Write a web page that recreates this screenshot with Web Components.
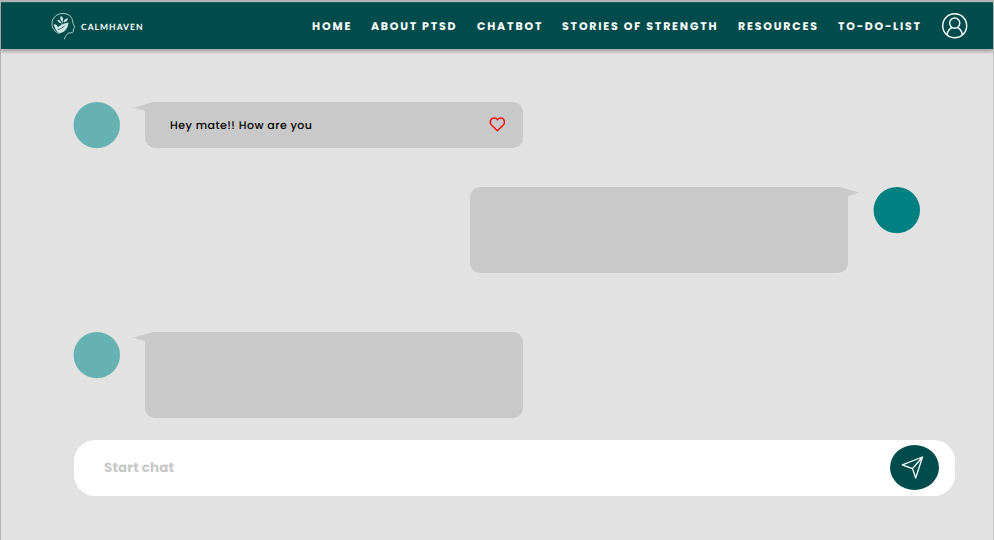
<!DOCTYPE html>
<html lang="en">
<head>
<meta charset="utf-8">
<title>CalmHaven Chatbot</title>
<style>
  html, body { margin: 0; height: 100%; overflow: hidden; }
  body { font-family: Poppins, Inter, sans-serif; background: #e2e2e2; }
</style>
</head>
<body>
<chat-page></chat-page>
<script>
const define = (name, html, setup) => {
  const t = document.createElement('template');
  t.innerHTML = html;
  customElements.define(name, class extends HTMLElement {
    connectedCallback() {
      if (this.shadowRoot) return;
      this.attachShadow({ mode: 'open' }).append(t.content.cloneNode(true));
      if (setup) setup(this);
    }
  });
};

/* A line of text tracked so that its letters fill the width attribute.
   The tiny rotation switches off vertical glyph snapping. */
define('tracked-text', `
  <style>:host{display:block;white-space:nowrap;line-height:1} span{display:inline-block;text-rendering:geometricPrecision;transform:rotate(.02deg)}</style>
  <span><slot></slot></span>`, host => {
  const w = parseFloat(host.getAttribute('width'));
  host.style.width = w + 'px';
  const span = host.shadowRoot.querySelector('span');
  const n = host.textContent.length;
  span.style.letterSpacing = (w - span.getBoundingClientRect().width) / (n - 1) + 'px';
});

define('brand-logo', `
  <style>
    :host{display:flex;align-items:center;color:#fff}
    svg{display:block;width:26px;height:30px}
    tracked-text{font:700 8.5px Lato,sans-serif;line-height:1;margin:4px 0 0 5px}
  </style>
  <svg viewBox="0 0 26 30" fill="none" stroke="#d9eceb" stroke-width=".8" stroke-linecap="round" stroke-linejoin="round">
    <path d="M9 22.5C4.5 20.8 2 17 2 12.8C2 6.5 7 2.5 13 2.5C19 2.5 22.6 6.4 22.8 11.2C22.8 13 24.6 14.8 24.8 16.3C24.8 17 23.5 17.1 23.5 17.7L23.3 20.7C22.8 22.3 18 21.3 17 23.2C15.8 24.6 15 26 14.5 28"/>
    <path d="M3.8 13.4C6 12.4 6.6 14.6 8.4 16C11.4 13.8 13.5 12.6 18.6 11.6C18 16.4 15.8 21.2 10 22.2C6.5 21 4.8 17.6 3.8 13.4Z" fill="#cfe6e4" stroke="none"/>
    <path d="M10.8 5C13.5 6.2 13.6 8.8 12.2 10.8C10.2 9.1 9.7 7.2 10.8 5ZM18 7.2C17.8 9.9 16 11.2 13.4 11.2C13.6 8.9 15.4 7.4 18 7.2ZM7.4 8.8C9.4 8.8 10.8 9.9 11.2 12C9 12.1 7.4 10.9 7.4 8.8Z" fill="#cfe6e4" stroke="none"/>
    <path d="M12.4 10.5L11.8 14" stroke-width=".7"/>
    <path d="M8 18.6C10.8 18.2 12.6 16.6 14.4 14.8" stroke="#004c4c" stroke-width=".7"/>
  </svg>
  <tracked-text width="61.5">CALMHAVEN</tracked-text>`);

define('nav-link', `
  <style>:host{display:block;color:#fff;font-size:11px;font-weight:700;line-height:1}</style>
  <tracked-text></tracked-text>`, host => {
  const old = host.shadowRoot.querySelector('tracked-text');
  const text = document.createElement('tracked-text');
  text.setAttribute('width', host.getAttribute('width'));
  text.textContent = host.getAttribute('label');
  old.replaceWith(text);
});

define('user-icon', `
  <style>:host{display:block} svg{display:block}</style>
  <svg width="26" height="26" viewBox="0 0 26 26" fill="none" stroke="#fff" stroke-width="1.4">
    <g transform="translate(-.3 -.3)"><circle cx="13" cy="13" r="12"/><circle cx="13" cy="10.4" r="5.1"/>
    <path d="M5.3 22.2C6 18 8.6 15.5 10.3 14.8M15.7 14.8C17.4 15.5 20 18 20.7 22.2"/></g>
  </svg>`);

define('site-header', `
  <style>
    :host{display:flex;align-items:center;box-sizing:border-box;height:47px;padding:0 25.5px 1px 49px;
      background:#004c4c;border-top:1px solid #256363;box-shadow:0 3px 3px rgba(0,0,0,.25);position:relative}
    nav{display:flex;gap:21px;margin:2px 22px 0 auto}
  </style>
  <brand-logo></brand-logo>
  <nav>
    <nav-link label="HOME" width="38.5"></nav-link>
    <nav-link label="ABOUT PTSD" width="84.5"></nav-link>
    <nav-link label="CHATBOT" width="64.5"></nav-link>
    <nav-link label="STORIES OF STRENGTH" width="154.5"></nav-link>
    <nav-link label="RESOURCES" width="79"></nav-link>
    <nav-link label="TO-DO-LIST" width="82"></nav-link>
  </nav>
  <user-icon></user-icon>`);

define('heart-icon', `
  <style>:host{display:block;margin-bottom:1px} svg{display:block}</style>
  <svg width="16" height="15" viewBox="0 0 16 15" fill="none" stroke="#f50d0d" stroke-width="1.5" stroke-linejoin="round">
    <path d="M8.4 13.7L2.3 7.8C.3 5.6 1.3 1.2 5 1.1C6.7 1 7.7 1.7 8.4 2.8C9.1 1.7 10.1 1 11.8 1.1C15.5 1.2 16.3 5.6 14.5 7.8Z"/>
  </svg>`);

define('chat-message', `
  <style>
    :host{display:flex;gap:14px;align-items:flex-start}
    :host([own]){flex-direction:row-reverse;gap:15px}
    .avatar{width:46.5px;height:46.5px;flex:none;overflow:visible}
    .avatar circle{fill:#66b2b2}
    :host([own]) .avatar circle{fill:#008080}
    .wrap{display:flex;align-items:flex-start}
    :host([own]) .wrap{flex-direction:row-reverse}
    .tail{display:block;width:20px;height:10px;margin-right:-9px}
    :host([own]) .tail{transform:scaleX(-1);margin:0 0 0 -9px}
    .bubble{box-sizing:border-box;width:377.5px;height:var(--bubble-height,86px);
      border-radius:10px;background:#c9c9c9;display:flex;align-items:center;justify-content:space-between;padding:0 17.5px 0 25px;
      font-size:11px;font-weight:500;color:#000}
    ::slotted(tracked-text){margin-top:1px}
  </style>
  <svg class="avatar" viewBox="0 0 46.5 46.5"><circle cx="22.8" cy="23.1" r="23.2"/></svg>
  <div class="wrap">
    <svg class="tail" viewBox="0 0 20 10"><path d="M20 0L.5 5.2Q-.2 5.8 .8 6.1L11 9L20 10Z" fill="#c9c9c9"/></svg>
    <div class="bubble"><slot></slot></div>
  </div>`);

define('send-button', `
  <style>:host{display:grid;place-items:center;width:49px;height:45px;border-radius:50%;background:#004c4c} svg{margin-right:3px}</style>
  <svg width="24" height="24" viewBox="0 0 24 24" fill="none" stroke="#fff" stroke-width="1.3" stroke-linejoin="round">
    <path d="M21.5 2L1.4 9.8L11.5 13.6L14.7 23ZM11.5 13.6L21.5 2"/>
  </svg>`);

define('chat-composer', `
  <style>
    :host{display:flex;box-sizing:border-box;align-items:center;justify-content:space-between;height:56px;
      border-radius:21px;background:#fff;padding:0 16.5px 1px 30.5px;font-size:13.4px;font-weight:700;color:#c9c9c9}
  </style>
  <tracked-text width="70">Start chat</tracked-text>
  <send-button></send-button>`);

define('chat-page', `
  <style>
    :host{display:block;box-sizing:border-box;height:540px;border-top:2px solid #b3b3b3;
      background:linear-gradient(90deg,#b3b3b3 1px,#e2e2e2 1px,#e2e2e2 993px,#c4c4c4 993px)}
    site-header{margin:0 1px}
    main{display:flex;flex-direction:column;padding:53px 39px 0 73.5px}
    chat-message[own]{margin:39px 35px 0 0}
    .third{margin-top:59.4px}
    chat-composer{margin-top:21.6px}
    .short{--bubble-height:46px;height:46px}
  </style>
  <site-header></site-header>
  <main>
    <chat-message class="short">
      <tracked-text width="142">Hey mate!! How are you</tracked-text>
      <heart-icon></heart-icon>
    </chat-message>
    <chat-message own></chat-message>
    <chat-message class="third"></chat-message>
    <chat-composer></chat-composer>
  </main>`);
</script>
</body>
</html>
